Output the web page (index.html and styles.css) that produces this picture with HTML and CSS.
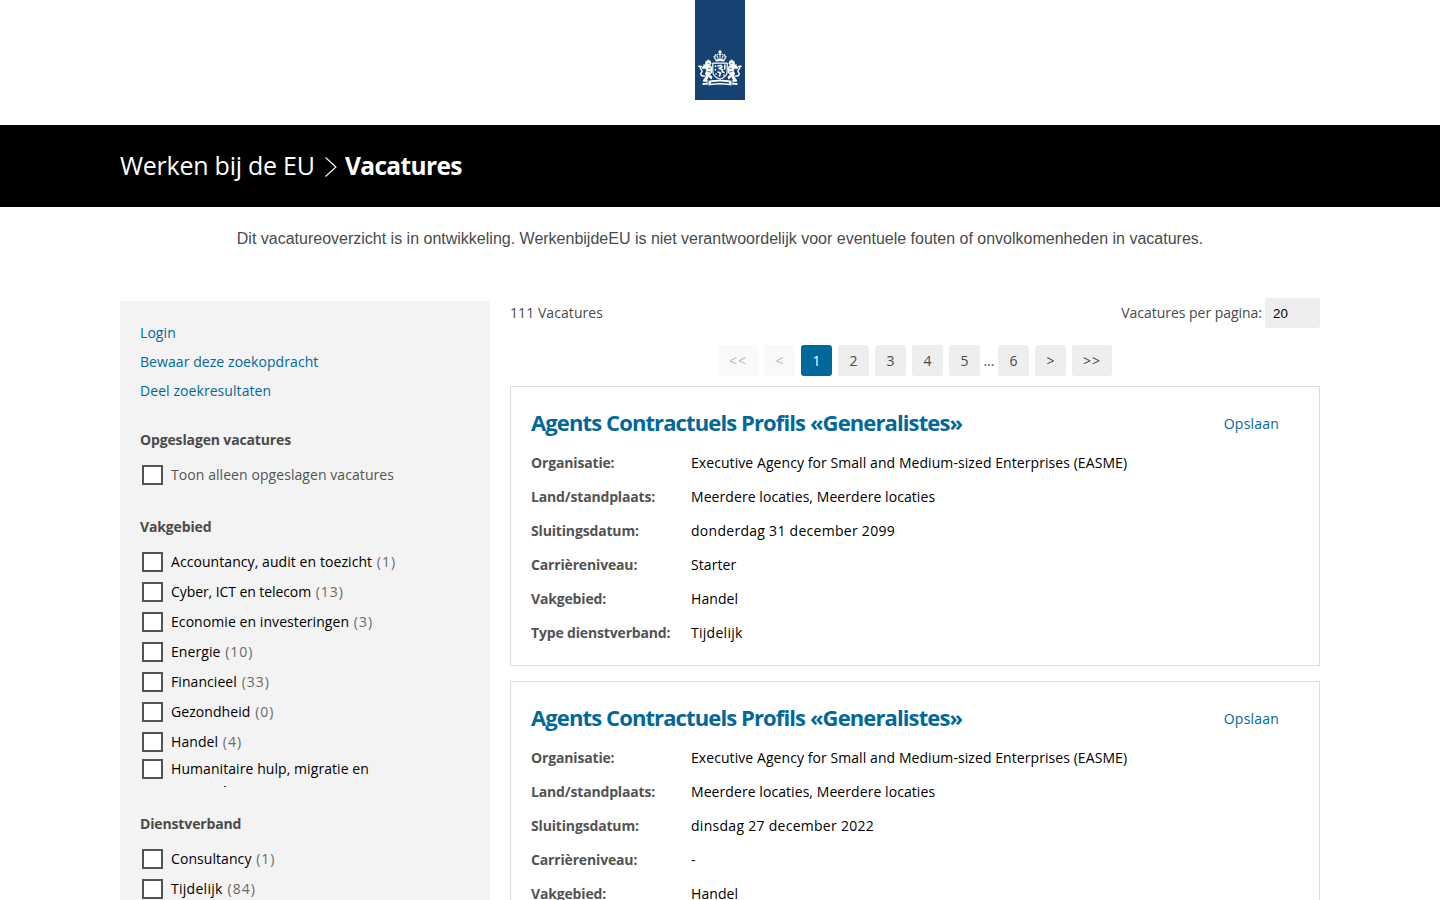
FILE: index.html
```html
<!DOCTYPE html>
<html lang="nl">
<head>
<meta charset="utf-8">
<title>Vacatures | Werken bij de EU</title>
<link rel="stylesheet" href="styles.css">
</head>
<body>
<header class="logo-bar">
  <div class="logo">
    <svg class="arms" viewBox="0 0 44 38" width="44" height="38" aria-label="Rijksoverheid">
      <defs>
        <g id="lion">
          <path fill="#fff" d="M7.500 11.500l3-2 2.500 2 .5 2.500-1.500 1 2 2v6l-2 1.500 2.500 2.500-1 2.500-3-2.500-1.500 3.500H5.500l1-2.500 1.500-2.500-1-2 1.500-3-1.500-2-2.500.5-1-1.500 2-1.500-.5-1.500h2z"/>
          <path fill="none" stroke="#fff" stroke-width="1.400" stroke-linecap="round" d="M6.500 26c-4 .5-4.500-2-2.800-4C5.500 20 2 19.500 2 17M.8 16.200l2.700.3"/>
          <path fill="none" stroke="#154273" stroke-width=".7" d="M9.500 13.500l2 .3M10 18.500l3-.5M9.500 21.500l3.500.5"/>
          <path fill="none" stroke="#fff" stroke-width="1.800" d="M5 30.500l4.500.5M4.500 34.200l5.500-.7"/>
        </g>
      </defs>
      <use href="#lion"/>
      <use href="#lion" transform="matrix(-1 0 0 1 44 0)"/>
      <g fill="none" stroke="#fff" stroke-linecap="round" stroke-linejoin="round">
        <path stroke-width="1.300" d="M22 .5v3.500M20.800 2h2.400"/>
        <path stroke-width="1.500" stroke-dasharray=".3 2" d="M17.500 9c-3-3 0-4.500 2-4.500h5c2 0 5 1.500 2 4.500"/>
        <path stroke-width=".9" d="M17.500 9c-2-2.500 0-3.500 1.700-3l1.300 3.500M26.500 9c2-2.500 0-3.500-1.700-3l-1.300 3.500M22 4v5"/>
        <path stroke-width="1.900" d="M18.300 10.500q3.700-1 7.400 0"/>
        <path stroke-width="1.200" d="M14.800 13.200h14.400v8.300c0 3.800-3 6.200-7.200 7.700-4.200-1.500-7.200-3.900-7.200-7.700z"/>
        <path stroke-width="1.600" d="M20 16l3-.7 1 1.700-3 1.500 3.500 1-.5 2 2 1M20 22l2.500 1-1 3M26.800 15v4M17.500 16v.5M17.500 19.500v.5M18 24v.3M26 25v.2"/>
      </g>
      <path fill="#fff" d="M10.500 30.800Q22 28.800 33.500 30.800v4.700Q22 33.500 10.500 35.500z"/>
      <path fill="none" stroke="#154273" stroke-width="1.500" d="M13 33q9-1.600 18 0"/>
    </svg>
  </div>
</header>
<nav class="crumbs">
  <div class="wrap crumb-row">
    <a class="crumb-home">Werken bij de EU</a>
    <svg class="chevron" viewBox="0 0 12 20" width="12" height="20"><path d="M.5 .5L11 10 .5 19.500" fill="none" stroke="#fff" stroke-width="1.100"/></svg>
    <strong class="crumb-current">Vacatures</strong>
  </div>
</nav>
<p class="notice">Dit vacatureoverzicht is in ontwikkeling. WerkenbijdeEU is niet verantwoordelijk voor eventuele fouten of onvolkomenheden in vacatures.</p>
<main class="wrap columns">
  <aside class="sidebar">
    <ul class="links">
      <li><a>Login</a></li>
      <li><a>Bewaar deze zoekopdracht</a></li>
      <li><a>Deel zoekresultaten</a></li>
    </ul>
    <section class="filter">
      <h2>Opgeslagen vacatures</h2>
      <label class="option muted"><i class="box"></i><span>Toon alleen opgeslagen vacatures</span></label>
    </section>
    <section class="filter">
      <h2>Vakgebied</h2>
      <div class="scroll">
        <label class="option"><i class="box"></i><span>Accountancy, audit en toezicht <em>(1)</em></span></label>
        <label class="option"><i class="box"></i><span class="snug">Cyber, ICT en telecom <em>(13)</em></span></label>
        <label class="option"><i class="box"></i><span>Economie en investeringen <em>(3)</em></span></label>
        <label class="option"><i class="box"></i><span>Energie <em>(10)</em></span></label>
        <label class="option"><i class="box"></i><span>Financieel <em>(33)</em></span></label>
        <label class="option"><i class="box"></i><span>Gezondheid <em>(0)</em></span></label>
        <label class="option"><i class="box"></i><span>Handel <em>(4)</em></span></label>
        <label class="option tall"><i class="box"></i><span>Humanitaire hulp, migratie en</span></label>
      </div>
    </section>
    <section class="filter">
      <h2>Dienstverband</h2>
      <label class="option"><i class="box"></i><span>Consultancy <em>(1)</em></span></label>
      <label class="option"><i class="box"></i><span class="loose">Tijdelijk <em>(84)</em></span></label>
    </section>
  </aside>
  <section class="results">
    <div class="toolbar">
      <span class="total">111 Vacatures</span>
      <label class="per-page"><span>Vacatures per pagina:</span><span class="select">20</span></label>
    </div>
    <div class="pager">
      <a class="page wide off">&lt;&lt;</a><a class="page off">&lt;</a><a class="page on">1</a><a class="page">2</a><a class="page">3</a><a class="page">4</a><a class="page">5</a><span class="dots">...</span><a class="page">6</a><a class="page">&gt;</a><a class="page wide">&gt;&gt;</a>
    </div>
    <article class="card">
      <div class="card-head"><h3>Agents Contractuels Profils «Generalistes»</h3><a class="save">Opslaan</a></div>
      <dl>
        <dt>Organisatie:</dt><dd>Executive Agency for Small and Medium-sized Enterprises (EASME)</dd>
        <dt>Land/standplaats:</dt><dd>Meerdere locaties, Meerdere locaties</dd>
        <dt>Sluitingsdatum:</dt><dd class="loose">donderdag 31 december 2099</dd>
        <dt>Carrièreniveau:</dt><dd>Starter</dd>
        <dt>Vakgebied:</dt><dd>Handel</dd>
        <dt>Type dienstverband:</dt><dd class="loose">Tijdelijk</dd>
      </dl>
    </article>
    <article class="card">
      <div class="card-head"><h3>Agents Contractuels Profils «Generalistes»</h3><a class="save">Opslaan</a></div>
      <dl>
        <dt>Organisatie:</dt><dd>Executive Agency for Small and Medium-sized Enterprises (EASME)</dd>
        <dt>Land/standplaats:</dt><dd>Meerdere locaties, Meerdere locaties</dd>
        <dt>Sluitingsdatum:</dt><dd class="loose">dinsdag 27 december 2022</dd>
        <dt>Carrièreniveau:</dt><dd>-</dd>
        <dt>Vakgebied:</dt><dd>Handel</dd>
      </dl>
    </article>
  </section>
</main>
</body>
</html>
```
FILE: styles.css
```css
* { box-sizing: border-box; }
html, body { height: 900px; overflow: hidden; }
body { margin: 0; background: #fff; color: #4a4a4a; font: 14px/20px "Open Sans", "Noto Sans", sans-serif; letter-spacing: .07px; }
h2, h3, p, ul, dl, dd { margin: 0; padding: 0; }
ul { list-style: none; }
em, i { font-style: normal; }
a { color: #01689b; text-decoration: none; }
.wrap { width: 1200px; margin: 0 auto; }
.logo-bar { height: 125px; display: flex; justify-content: center; }
.logo { width: 50px; height: 100px; background: #154273; padding: 50px 3px 0; }
.arms { display: block; }
.crumbs { background: #000; height: 82px; }
.crumb-row { height: 82px; padding-bottom: 2px; display: flex; align-items: center; color: #fff; font-size: 25px; line-height: 36px; }
.crumb-home { color: #fff; width: 205px; white-space: nowrap; letter-spacing: -.25px; }
.chevron { display: block; margin: 3px 8px 0 0; }
.crumb-current { font-weight: 700; font-size: 24.5px; letter-spacing: -.65px; padding-top: 2px; }
.notice { padding-top: 22px; height: 94px; text-align: center; font: 16px/20px "Liberation Sans", Arial, sans-serif; letter-spacing: 0; }
.columns { display: flex; gap: 20px; align-items: flex-start; height: 599px; }
.sidebar { width: 370px; height: 599px; background: #f3f3f3; padding: 18px 20px 0; overflow: hidden; }
.links li { height: 29px; line-height: 28px; }
.filter { padding-top: 24px; margin-bottom: 3px; }
.filter h2 { font-size: 14px; line-height: 20px; font-weight: 700; margin-bottom: 10px; letter-spacing: -.14px; }
.option { display: flex; align-items: center; height: 30px; color: #000; padding-left: 2px; }
.option.muted { color: #535353; }
.option em { color: #696969; margin-left: 1px; letter-spacing: 1px; }
.option.tall { height: 24px; }
.snug { letter-spacing: -.08px; }
.loose { letter-spacing: .28px; }
.box { width: 21px; height: 20px; border: 2px solid #535353; background: #fff; margin-right: 8px; flex: none; }
.scroll { height: 240px; overflow: hidden; }
.scroll::after { content: ""; display: block; width: 2px; height: 1px; margin: 5px 0 0 84px; background: #333; }
.results { width: 810px; height: 602px; margin-top: -3px; overflow: hidden; }
.toolbar { display: flex; justify-content: space-between; align-items: center; height: 30px; }
.per-page { display: flex; align-items: center; gap: 3px; letter-spacing: -.03px; }
.select { width: 55px; height: 30px; background: #eee; border-radius: 3px; padding-left: 8px; color: #000; font: 13.333px/31px "Liberation Sans", Arial, sans-serif; letter-spacing: 0; }
.pager { display: flex; justify-content: center; gap: 6px; margin: 17px 0 10px; }
.page { width: 31px; height: 31px; border-radius: 3px; background: #eee; color: #4a4a4a; text-align: center; line-height: 31px; }
.page.wide { width: 40px; letter-spacing: 1px; }
.page.off { background: #f9f9f9; color: #b7b7b7; }
.page.on { background: #01689b; color: #fff; }
.dots { width: 12px; margin: 0 -3px; line-height: 31px; text-align: center; }
.card { height: 280px; border: 1px solid #ddd; padding: 19px 20px 0; margin-bottom: 15px; }
.card-head { display: flex; justify-content: space-between; align-items: center; height: 32px; margin-bottom: 8px; padding-right: 20px; }
.card h3 { font-size: 22px; line-height: 32px; font-weight: 700; color: #01689b; letter-spacing: -.89px; white-space: nowrap; }
.save { padding-top: 4px; letter-spacing: .2px; }
dl { display: grid; grid-template-columns: 160px 1fr; grid-auto-rows: 34px; line-height: 34px; }
dt { font-weight: 700; color: #535353; white-space: nowrap; letter-spacing: -.16px; }
dd { color: #000; white-space: nowrap; }
```
